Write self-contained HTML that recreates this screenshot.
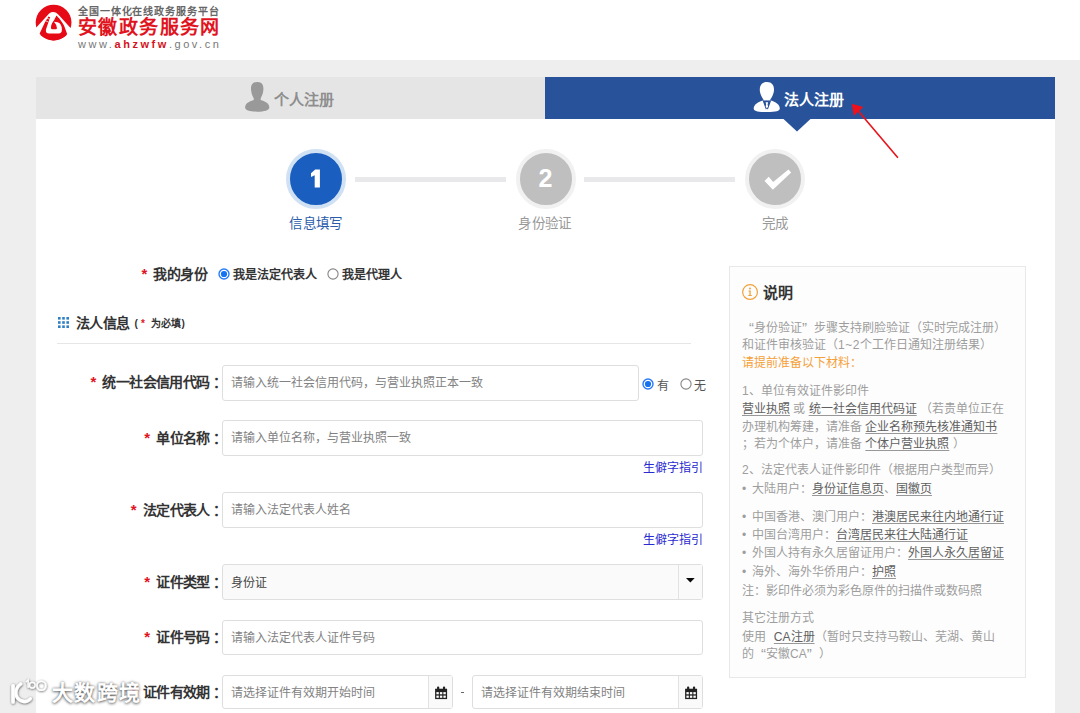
<!DOCTYPE html>
<html lang="zh-CN">
<head>
<meta charset="utf-8">
<title>法人注册</title>
<style>
*{box-sizing:border-box;margin:0;padding:0}
html,body{width:1080px;height:713px;overflow:hidden;background:#eee;font-family:"Liberation Sans",sans-serif;color:#333}
.abs{position:absolute}
#hdr{left:0;top:0;width:1080px;height:60px;background:#fff}
#main{left:35.6px;top:77px;width:1019px;height:640px;background:#fff}
#tabL{left:35.6px;top:77px;width:509.6px;height:42.4px;background:#e5e5e5}
#tabR{left:545.2px;top:77px;width:509.4px;height:42.4px;background:#28539a}
.tabtxt{font-size:15px;font-weight:bold;line-height:20px;white-space:nowrap}
.t1{left:78px;top:5.5px;font-size:10px;line-height:12px;color:#666;font-weight:bold;white-space:nowrap;letter-spacing:.9px}
.t2{left:78px;top:15.2px;font-size:19px;line-height:26px;color:#e0141e;font-weight:bold;white-space:nowrap;letter-spacing:1.4px}
.t3{left:78px;top:38px;font-size:11px;line-height:12px;color:#777;white-space:nowrap;letter-spacing:2.55px}
.t3 b{color:#d4121c}
.circ{width:60px;height:60px;border-radius:50%;border:4px solid #f1f1f1;background:#bfbfbf;color:#fff;font-weight:bold;font-size:25px;text-align:center;line-height:51px}
.circ.on{border-color:#d0e1f4;background:#1a5fbf}
.sline{height:4.5px;background:#e9e9eb;top:177.2px}
.slab{font-size:13.5px;letter-spacing:.4px;line-height:20px;color:#999;width:120px;text-align:center;white-space:nowrap;top:213.5px}
.lab{font-size:14px;letter-spacing:-0.55px;font-weight:bold;color:#333;line-height:20px;white-space:nowrap;text-align:right;width:200px;left:26px}
.lab i{font-style:normal;color:#e0141e;font-weight:bold;font-size:15px;margin-right:3.2px}
.lab s{text-decoration:none;margin-left:2.7px}
.inp{border:1px solid #dedede;border-radius:3px;background:#fff;font-size:12px;color:#828282;line-height:34px;padding-left:8px;white-space:nowrap;overflow:hidden;height:36px}
.lnk{font-size:12px;color:#2a2ad0;line-height:14px;white-space:nowrap}
.radio{width:11px;height:11px;border-radius:50%;border:1px solid #767676;background:#fff}
.radio.on{border:1.5px solid #1a73e8}
.radio.on:after{content:"";position:absolute;left:1.3px;top:1.3px;width:5.4px;height:5.4px;border-radius:50%;background:#1a73e8}
.rt{font-size:12px;font-weight:bold;color:#333;line-height:14px;white-space:nowrap}
#box{left:729px;top:266px;width:297px;height:412px;border:1px solid #e8e8e8;background:#fdfdfd}
.p{left:742px;font-size:12px;line-height:17px;color:#9e9e9e;white-space:nowrap}
.p u{color:#606060;text-decoration:underline;text-decoration-color:#989898;text-underline-offset:2px;text-decoration-thickness:1px}
.b{display:inline-block;width:10px;padding-left:0}
.q{display:inline-block;width:6px;font-size:15px;line-height:12px;vertical-align:-1px}.ql{text-align:right;margin-left:6px}.qr{text-align:left;margin-right:6px}
</style>
</head>
<body>
<div class="abs" id="hdr"></div>
<div class="abs" id="main"></div>
<div class="abs" id="tabL"></div>
<div class="abs" id="tabR"></div>

<!-- header logo -->
<svg class="abs" style="left:34px;top:3px" width="40" height="40" viewBox="0 0 713 713">
<defs><clipPath id="lc"><circle cx="349" cy="349" r="319"/></clipPath></defs>
<circle cx="349" cy="349" r="319" fill="#e60a17"/>
<path d="M-10 490 L270 185 Q330 140 395 172 Q430 195 470 245 L700 500 L600 575 L90 575 Z" fill="#fff"/>
<g clip-path="url(#lc)">
<path d="M400 222 Q460 278 505 350 L535 402 L588 545 L640 700 L60 700 L100 545 L200 335 L258 242 L288 255 L215 470 Q198 545 268 545 L440 545 Q500 545 497 470 Q490 360 420 345 L356 333 Q400 375 409 450 Q410 466 395 466 L318 466 Q302 466 303 440 L306 400 Q325 350 362 300 Z" fill="#e60a17"/>
</g>
<path d="M226 268 L280 290 M202 318 L256 338" stroke="#fff" stroke-width="12" fill="none"/>
</svg>
<div class="abs t1">全国一体化在线政务服务平台</div>
<div class="abs t2">安徽政务服务网</div>
<div class="abs t3">www.<b>ahzwfw</b>.gov.cn</div>

<!-- tabs -->
<div class="abs tabtxt" style="left:274px;top:89.5px;color:#8e8e8e">个人注册</div>
<div class="abs tabtxt" style="left:783.5px;top:89.5px;color:#fff">法人注册</div>
<svg class="abs" style="left:783px;top:119px" width="28" height="13"><path d="M0.5 0H27.5L14 12.5Z" fill="#28539a"/></svg>


<!-- tab icons -->
<svg class="abs" style="left:230px;top:75px" width="120" height="50" viewBox="0 0 1080 450">
<path d="M245 62 C300 60 306 110 298 150 C294 178 280 196 276 212 L276 226 C310 238 352 252 354 290 C354 318 310 330 245 330 C180 330 136 318 136 290 C138 252 180 238 214 226 L214 212 C208 196 196 178 192 150 C184 110 190 64 245 62 Z" fill="#999"/>
</svg>
<svg class="abs" style="left:745px;top:77px" width="50" height="40" viewBox="0 0 891 713">
<path d="M390 90 C525 90 540 225 492 330 C472 376 452 398 440 422 L340 422 C328 398 308 376 288 330 C240 225 255 90 390 90 Z" fill="#fff"/>
<path d="M155 562 C155 486 240 446 318 420 L462 420 C540 446 620 486 620 562 C620 604 556 626 388 626 C220 626 155 604 155 562 Z" fill="#fff"/>
<path d="M314 420 L466 420 L408 580 L390 560 L372 580 Z" fill="#28539a"/>
<path d="M366 448 L414 448 L403 484 L411 532 L390 558 L369 532 L377 484 Z" fill="#fff"/>
</svg>
<svg class="abs" style="left:305px;top:165px;z-index:3" width="22" height="28" viewBox="305 165 22 28"><path d="M315.2 169.5 H319.9 V187.5 H314.7 V175.2 L311 176.9 V173.2 Z" fill="#fff"/></svg>
<!-- check -->
<svg class="abs" style="left:760px;top:165px;z-index:3" width="36" height="30" viewBox="760 165 36 30"><path d="M764.5 181 L768.7 176.7 L773.2 182.1 L788.4 169.5 L791.2 172.5 L772.9 189.8 Z" fill="#fff"/></svg>
<!-- red arrow -->
<svg class="abs" style="left:840px;top:95px" width="70" height="70" viewBox="840 95 70 70"><path d="M858.3 111 L897.9 157.8" stroke="#e8131b" stroke-width="1.6" fill="none"/><path d="M851.8 103.8 L863.3 106.9 L853.8 115.8 Z" fill="#f0101a"/></svg>

<!-- steps -->
<div class="abs sline" style="left:355px;width:151px"></div>
<div class="abs sline" style="left:584px;width:151px"></div>
<div class="abs circ on" style="left:286px;top:149px"></div>
<div class="abs circ" style="left:515.5px;top:149px">2</div>
<div class="abs circ" style="left:744.8px;top:149px"></div>
<div class="abs slab" style="left:256px;color:#2a5caa">信息填写</div>
<div class="abs slab" style="left:485px">身份验证</div>
<div class="abs slab" style="left:715px">完成</div>


<!-- identity row -->
<div class="abs lab" style="top:263.5px;left:7px"><i>*</i> 我的身份</div>
<svg class="abs" style="left:215.6px;top:265.8px" width="16" height="16" viewBox="0 0 16 16"><circle cx="8" cy="8" r="5" fill="#fff" stroke="#2a7bf6" stroke-width="1.4"/><circle cx="8" cy="8" r="3.1" fill="#1573f2"/></svg>
<div class="abs rt" style="left:233px;top:268px">我是法定代表人</div>
<svg class="abs" style="left:324.6px;top:265.8px" width="16" height="16" viewBox="0 0 16 16"><circle cx="8" cy="8" r="5.1" fill="#fff" stroke="#858585" stroke-width="1.1"/></svg>
<div class="abs rt" style="left:342px;top:268px">我是代理人</div>

<!-- section header -->
<svg class="abs" style="left:57.8px;top:316.7px" width="12" height="12"><g fill="#2f7fc4"><rect x="0" y="0" width="2.6" height="2.6"/><rect x="4.2" y="0" width="2.6" height="2.6"/><rect x="8.4" y="0" width="2.6" height="2.6"/><rect x="0" y="4.2" width="2.6" height="2.6"/><rect x="4.2" y="4.2" width="2.6" height="2.6"/><rect x="8.4" y="4.2" width="2.6" height="2.6"/><rect x="0" y="8.4" width="2.6" height="2.6"/><rect x="4.2" y="8.4" width="2.6" height="2.6"/><rect x="8.4" y="8.4" width="2.6" height="2.6"/></g></svg>
<div class="abs" style="left:75.5px;top:312.5px;font-size:14px;letter-spacing:-0.5px;font-weight:bold;line-height:20px;white-space:nowrap;color:#333">法人信息 <span style="font-size:10px;letter-spacing:.2px;position:relative;top:-1px;margin-left:1.5px">(<span style="color:#e0141e;margin:0 3px 0 3px">*</span> 为必填)</span></div>
<div class="abs" style="left:57px;top:343px;width:634px;height:1px;background:#e6e6e6"></div>

<!-- rows -->
<div class="abs lab" style="top:372px"><i>*</i> 统一社会信用代码<s>：</s></div>
<div class="abs inp" style="left:222px;top:365px;width:417px">请输入统一社会信用代码，与营业执照正本一致</div>
<svg class="abs" style="left:640.3px;top:376.1px" width="16" height="16" viewBox="0 0 16 16"><circle cx="8" cy="8" r="5" fill="#fff" stroke="#2a7bf6" stroke-width="1.4"/><circle cx="8" cy="8" r="3.1" fill="#1573f2"/></svg>
<div class="abs rt" style="left:657px;top:379px;font-weight:normal;color:#555">有</div>
<svg class="abs" style="left:677.6px;top:376.1px" width="16" height="16" viewBox="0 0 16 16"><circle cx="8" cy="8" r="5.1" fill="#fff" stroke="#858585" stroke-width="1.1"/></svg>
<div class="abs rt" style="left:694px;top:379px;font-weight:normal;color:#555">无</div>

<div class="abs lab" style="top:427.5px"><i>*</i> 单位名称<s>：</s></div>
<div class="abs inp" style="left:222px;top:420px;width:481px">请输入单位名称，与营业执照一致</div>
<div class="abs lnk" style="left:642.5px;top:461px">生僻字指引</div>

<div class="abs lab" style="top:499.5px"><i>*</i> 法定代表人<s>：</s></div>
<div class="abs inp" style="left:222px;top:492px;width:481px">请输入法定代表人姓名</div>
<div class="abs lnk" style="left:642.5px;top:533px">生僻字指引</div>

<div class="abs lab" style="top:572px"><i>*</i> 证件类型<s>：</s></div>
<div class="abs inp" style="left:222px;top:564px;width:481px;height:35.5px;line-height:36px;background:#fafafa;color:#444">身份证</div>
<div class="abs" style="left:678px;top:565px;width:24px;height:33.5px;border-left:1px solid #e2e2e2;background:#fafafa"></div>
<svg class="abs" style="left:686px;top:577.7px" width="10" height="6"><path d="M0 0H8.7L4.35 4.5Z" fill="#0a0a0a"/></svg>

<div class="abs lab" style="top:627px"><i>*</i> 证件号码<s>：</s></div>
<div class="abs inp" style="left:222px;top:620px;width:481px;height:35px;line-height:35px">请输入法定代表人证件号码</div>

<div class="abs lab" style="top:682px"><i>*</i> 证件有效期<s>：</s></div>
<div class="abs inp" style="left:222px;top:675px;width:231px;height:34px;line-height:34px">请选择证件有效期开始时间</div>
<div class="abs" style="left:428px;top:676px;width:24px;height:32px;border-left:1px solid #e2e2e2;background:#fafafa"></div>
<div class="abs" style="left:460.5px;top:691.6px;width:3.6px;height:1.2px;background:#666"></div>
<div class="abs inp" style="left:472px;top:675px;width:231px;height:34px;line-height:34px">请选择证件有效期结束时间</div>
<div class="abs" style="left:678px;top:676px;width:24px;height:32px;border-left:1px solid #e2e2e2;background:#fafafa"></div>
<svg class="abs cal" style="left:433.8px;top:685.6px" width="14.2" height="14.2" viewBox="0 0 13 13"><path d="M1 2.5H12V12H1Z" fill="#222"/><rect x="2.8" y="0.5" width="2" height="3.4" rx=".8" fill="#222"/><rect x="8.2" y="0.5" width="2" height="3.4" rx=".8" fill="#222"/><g fill="#fff"><rect x="2.2" y="5.6" width="2.2" height="2"/><rect x="5.4" y="5.6" width="2.2" height="2"/><rect x="8.6" y="5.6" width="2.2" height="2"/><rect x="2.2" y="8.8" width="2.2" height="2"/><rect x="5.4" y="8.8" width="2.2" height="2"/><rect x="8.6" y="8.8" width="2.2" height="2"/></g></svg>
<svg class="abs cal" style="left:683.8px;top:685.6px" width="14.2" height="14.2" viewBox="0 0 13 13"><path d="M1 2.5H12V12H1Z" fill="#222"/><rect x="2.8" y="0.5" width="2" height="3.4" rx=".8" fill="#222"/><rect x="8.2" y="0.5" width="2" height="3.4" rx=".8" fill="#222"/><g fill="#fff"><rect x="2.2" y="5.6" width="2.2" height="2"/><rect x="5.4" y="5.6" width="2.2" height="2"/><rect x="8.6" y="5.6" width="2.2" height="2"/><rect x="2.2" y="8.8" width="2.2" height="2"/><rect x="5.4" y="8.8" width="2.2" height="2"/><rect x="8.6" y="8.8" width="2.2" height="2"/></g></svg>


<!-- info box -->
<div class="abs" id="box"></div>
<svg class="abs" style="left:741px;top:282.7px" width="18" height="18" viewBox="0 0 18 18"><circle cx="9.05" cy="9.05" r="7.4" fill="none" stroke="#f0a23c" stroke-width="1.2"/><rect x="8.4" y="7.6" width="1.3" height="5" fill="#f0a23c"/><rect x="7.5" y="7.6" width="1.8" height="1" fill="#f0a23c"/><rect x="7.3" y="12" width="3.5" height="1" fill="#f0a23c"/><circle cx="9" cy="5.5" r=".95" fill="#f0a23c"/></svg>
<div class="abs" style="left:762.5px;top:283px;font-size:15px;font-weight:bold;line-height:20px;color:#333;white-space:nowrap">说明</div>
<div class="abs p" style="top:320px"><span class="q ql">“</span>身份验证<span class="q qr">”</span>步骤支持刷脸验证（实时完成注册）</div>
<div class="abs p" style="top:337px">和证件审核验证（<span style="letter-spacing:.5px">1~2</span>个工作日通知注册结果）</div>
<div class="abs p" style="top:355px;color:#f5a039">请提前准备以下材料：</div>
<div class="abs p" style="top:383px">1、单位有效证件影印件</div>
<div class="abs p" style="top:401px"><u>营业执照</u> 或 <u>统一社会信用代码证</u> （若贵单位正在</div>
<div class="abs p" style="top:419px">办理机构筹建，请准备 <u>企业名称预先核准通知书</u></div>
<div class="abs p" style="top:436px">；若为个体户，请准备 <u>个体户营业执照</u> ）</div>
<div class="abs p" style="top:462px">2、法定代表人证件影印件（根据用户类型而异）</div>
<div class="abs p" style="top:481px"><span class="b">•</span>大陆用户：<u>身份证信息页</u>、<u>国徽页</u></div>
<div class="abs p" style="top:509px"><span class="b">•</span>中国香港、澳门用户：<u>港澳居民来往内地通行证</u></div>
<div class="abs p" style="top:527px"><span class="b">•</span>中国台湾用户：<u>台湾居民来往大陆通行证</u></div>
<div class="abs p" style="top:545px"><span class="b">•</span>外国人持有永久居留证用户：<u>外国人永久居留证</u></div>
<div class="abs p" style="top:564px"><span class="b">•</span>海外、海外华侨用户：<u>护照</u></div>
<div class="abs p" style="top:583px">注：影印件必须为彩色原件的扫描件或数码照</div>
<div class="abs p" style="top:610px">其它注册方式</div>
<div class="abs p" style="top:629px">使用 <u style="margin-left:4.5px">CA注册</u>（暂时只支持马鞍山、芜湖、黄山</div>
<div class="abs p" style="top:646px">的<span class="q ql">“</span>安徽CA<span class="q qr">”</span>）</div>


<!-- watermark -->
<svg class="abs" style="left:0;top:665px;z-index:5" width="60" height="48" viewBox="0 0 405 324">
<defs><filter id="ws" x="-20%" y="-20%" width="140%" height="140%"><feDropShadow dx="2" dy="4" stdDeviation="6" flood-color="#000" flood-opacity=".75"/></filter></defs>
<g filter="url(#ws)" fill="none" stroke="#fff" stroke-linecap="round">
<path d="M88 140 V250" stroke-width="24"/>
<path d="M140 128 C96 160 96 215 140 240 C165 252 190 245 205 228" stroke-width="22"/>
<path d="M178 112 L190 102 V150" stroke-width="9"/>
<circle cx="218" cy="136" r="19" stroke-width="9"/>
<circle cx="279" cy="140" r="30" stroke-width="11"/>
</g>
</svg>
<div class="abs" style="left:52px;top:679px;z-index:5;font-size:21px;font-weight:bold;line-height:28px;color:#fff;letter-spacing:1.35px;white-space:nowrap;text-shadow:0 0 3px rgba(0,0,0,.5),0 1px 3px rgba(0,0,0,.45)">大数跨境</div>

</body>
</html>
